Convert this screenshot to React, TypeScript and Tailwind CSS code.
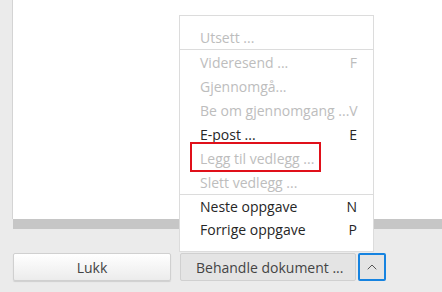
import { ChevronUp } from "lucide-react";

type Item = { label: string; key?: string; enabled?: boolean; marked?: boolean };

const groupA: Item[] = [{ label: "Utsett ..." }];

const groupB: Item[] = [
  { label: "Videresend ...", key: "F" },
  { label: "Gjennomgå..." },
  { label: "Be om gjennomgang ...", key: "V" },
  { label: "E-post ...", key: "E", enabled: true },
  { label: "Legg til vedlegg ...", marked: true },
  { label: "Slett vedlegg ..." },
];

const groupC: Item[] = [
  { label: "Neste oppgave", key: "N", enabled: true },
  { label: "Forrige oppgave", key: "P", enabled: true },
];

const MenuRow = ({ item, h }: { item: Item; h: string }) => (
  <div
    className={`relative flex items-center justify-between pl-[20px] pr-[16px] whitespace-nowrap ${h} ${
      item.enabled ? "text-[#262626]" : "text-[#bdbdbd]"
    }`}
  >
    <span>{item.label}</span>
    {item.key && <span>{item.key}</span>}
    {item.marked && (
      <div className="absolute left-[10px] top-[-4px] w-[131px] h-[30px] border-2 border-[#e0101a]" />
    )}
  </div>
);

export default function App() {
  return (
    <div
      className="relative w-[442px] h-[292px] overflow-hidden bg-[#ebebeb] text-[14px]"
      style={{ fontFamily: '"Open Sans", "Noto Sans", sans-serif' }}
    >
      {/* document area */}
      <div className="ml-[12px] h-[219px] bg-white border-l border-[#d4d4d4]" />
      <div className="ml-[13px] h-[10px] bg-[#c6c6c6]" />

      {/* footer buttons */}
      <div className="flex items-center pl-[13px] mt-[24px]">
        <button className="w-[158px] h-[28px] rounded-[2px] border border-[#d0d0d0] bg-gradient-to-b from-white to-[#ececec] text-[#444] shadow-[0_1px_1px_rgba(0,0,0,0.12)]">
          Lukk
        </button>
        <button className="ml-[9px] w-[176px] h-[28px] rounded-[2px] border border-[#d0d0d0] bg-[#e4e4e4] text-[#444] text-left pl-[15px]">
          Behandle dokument ...
        </button>
        <button className="ml-[2px] w-[28px] h-[28px] rounded-[2px] border-2 border-[#1683e0] bg-[#e4e4e4] flex items-center justify-center text-[#555]">
          <ChevronUp size={16} strokeWidth={1.5} />
        </button>
      </div>

      {/* dropdown menu */}
      <div className="absolute left-[179px] top-[15px] w-[195px] h-[237px] bg-white border border-[#dcdcdc] flex flex-col">
        <div className="pt-[9px]">
          {groupA.map((i) => (
            <MenuRow key={i.label} item={i} h="h-[24px]" />
          ))}
        </div>
        <div className="border-t border-[#dcdcdc]">
          {groupB.map((i) => (
            <MenuRow key={i.label} item={i} h="h-[24px]" />
          ))}
        </div>
        <div className="border-t border-[#dcdcdc]">
          {groupC.map((i) => (
            <MenuRow key={i.label} item={i} h="h-[23px]" />
          ))}
        </div>
      </div>
    </div>
  );
}
